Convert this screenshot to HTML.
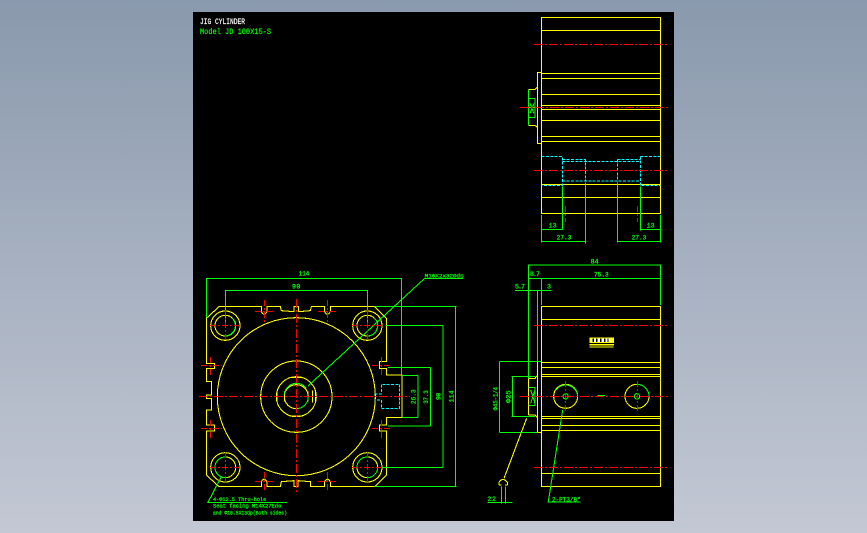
<!DOCTYPE html>
<html><head><meta charset="utf-8"><style>
html,body{margin:0;padding:0;width:867px;height:533px;overflow:hidden;background:linear-gradient(#8a99ad,#c3c8d4)}
#c{position:absolute;left:193px;top:12px;width:481px;height:509px;background:#000}
svg{position:absolute;left:0;top:0;shape-rendering:crispEdges}
text{font-family:"Liberation Mono",monospace;fill:#0f0;stroke:#0f0;stroke-width:.8}
.y{fill:none;stroke:#ff0;stroke-width:3.2}
.g{fill:none;stroke:#0f0;stroke-width:3.2}
.r{fill:none;stroke:#f00;stroke-width:1;stroke-dasharray:9 2 2 2}
.r2{fill:none;stroke:#f00;stroke-width:1;stroke-dasharray:6 2 2 2}
.c{fill:none;stroke:#0ff;stroke-width:3.2;stroke-dasharray:9 4}
</style></head><body>
<div id="c"></div>
<svg width="867" height="533" viewBox="0 0 867 533">
<text x="200" y="24" font-size="8" textLength="45" lengthAdjust="spacingAndGlyphs" style="fill:#fff;stroke:#fff;stroke-width:.2">JIG CYLINDER</text>
<text x="200" y="34" font-size="8" textLength="71" lengthAdjust="spacingAndGlyphs" style="stroke-width:.2">Model JD 100X15-S</text>

<g transform="translate(193 260) scale(.33333)">
<path class="y" d="M78 140H205V155Q213 170 222 155V140H262L265 152 303 155V140H317V155L352 152 355 140H395V155Q403 170 412 155V140H545L580 175V305H560V325H580V345L627 345V472H580V495H560V513H580V645L545 680H412V665Q403 650 395 665V680H352V665L315 662V680H303V662L265 665 262 680H222V665Q213 650 205 665V680H78L40 645V513H65V495H40V450H55V415H40V405H55V365H40V325H65V310H40V175Z"/>
<circle class="y" cx="310" cy="410" r="237"/>
<circle class="y" cx="310" cy="410" r="107"/>
<circle class="y" cx="310" cy="410" r="60"/>
<circle class="y" cx="310" cy="410" r="36"/>
<path class="y" d="M275 395V425M345 395V425M290 352H330M290 468H330M359 392V428M368 392V428M252 392V428"/>
<circle class="y" cx="97" cy="197" r="44"/><circle class="y" cx="523" cy="197" r="44"/><circle class="y" cx="97" cy="622" r="44"/><circle class="y" cx="523" cy="622" r="44"/>
<circle class="y" cx="97" cy="197" r="31"/><circle class="y" cx="523" cy="197" r="31"/><circle class="y" cx="97" cy="622" r="31"/><circle class="y" cx="523" cy="622" r="31"/>
<path class="g" d="M118 175A31 31 0 0 1 97 228M545 175A31 31 0 0 1 523 228M66 622A31 31 0 0 1 97 591M100 653A31 31 0 0 1 66 622M492 622A31 31 0 0 1 523 591M554 622A31 31 0 0 1 523 653M275 400A36 36 0 0 1 340 385M346 410A36 36 0 0 1 310 446"/>
<path class="c" d="M545 402H565V373H620V445H565V420H545"/>
<path class="g" d="M40 172V55H625V345M97 190V92H523V190M545 140H790M545 680H790M788 140V680M578 197H750M550 622H750M750 197V622M585 323H712M585 498H712M712 323V498M627 347H675M627 472H675M675 347V472"/>
<path class="g" d="M810 55H695L345 378M282 727H45L85 650"/>
<text x="317" y="47" font-size="18" textLength="32" lengthAdjust="spacingAndGlyphs">114</text>
<text x="297" y="86" font-size="20" textLength="25">90</text>
<text x="695" y="52" font-size="17" textLength="117" lengthAdjust="spacingAndGlyphs">M16X2x320dp</text>
<text x="60" y="723" font-size="17" textLength="160" lengthAdjust="spacingAndGlyphs">4-Φ12.5 Thru-hole</text>
<text x="60" y="743" font-size="17" textLength="205" lengthAdjust="spacingAndGlyphs">Seat facing M14X27Edo</text>
<text x="60" y="764" font-size="17" textLength="222" lengthAdjust="spacingAndGlyphs">and Φ18.5X13dp(Both sides)</text>
<text transform="translate(667 432) rotate(-90)" font-size="19" textLength="44" lengthAdjust="spacingAndGlyphs">26.3</text>
<text transform="translate(705 431) rotate(-90)" font-size="19" textLength="40" lengthAdjust="spacingAndGlyphs">37.3</text>
<text transform="translate(743 420) rotate(-90)" font-size="19" textLength="22">90</text>
<text transform="translate(781 427) rotate(-90)" font-size="19" textLength="36" lengthAdjust="spacingAndGlyphs">114</text>
</g>

<g transform="translate(480 255) scale(.33333)">
<path class="y" d="M184 154H541V694H184ZM184 193H541M184 322H541M184 337H541M184 358H541M184 364H541M184 484H541M184 490H541M184 511H541M184 526H541M184 655H541"/>
<path class="y" d="M184 319H172V532H184M145 370H165L172 362M145 480H165L172 488M145 370V480"/>
<circle class="y" cx="257" cy="424" r="36"/><circle class="y" cx="471" cy="424" r="36"/>
<circle class="g" cx="257" cy="424" r="8"/><circle class="g" cx="471" cy="424" r="8"/>
<path class="g" d="M228 405A36 36 0 0 1 293 424M470 388A36 36 0 0 1 507 424M145 397H165V452H145M152 405L165 445M165 405L152 445M352 421H375"/>
<rect x="328" y="247" width="74" height="24" fill="#ff0"/>
<rect x="334" y="251" width="56" height="10" fill="#fff"/>
<path d="M340 251V261M350 251V261M362 251V261M374 251V261M384 251V261" stroke="#000" stroke-width="4"/>
<path class="y" d="M328 276H400" />
<path d="M328 266H402" stroke="#000" stroke-width="3"/>
<path class="g" d="M145 28V319M145 30H541M145 70H541M541 28V150M184 70V150M105 106H214M145 106V370M172 106V319M58 319H184M58 532H172M58 319V532M95 364H165M95 484H165M97 364V484"/>
<path class="g" d="M205 740L248 465M202 741H302M22 742H98M64 695V745M77 695V745"/>
<path class="y" d="M140 490L72 670M57 690V682Q68 665 82 682V690M57 690H65M75 690H82"/>
<text x="332" y="26" font-size="20" textLength="24">84</text>
<text x="150" y="63" font-size="20" textLength="30">8.7</text>
<text x="342" y="64" font-size="20" textLength="44" lengthAdjust="spacingAndGlyphs">75.3</text>
<text x="105" y="101" font-size="20" textLength="30">5.7</text>
<text x="201" y="101" font-size="20">3</text>
<text transform="translate(52 466) rotate(-90)" font-size="18" textLength="70" lengthAdjust="spacingAndGlyphs">Φ45-1/4</text>
<text transform="translate(91 444) rotate(-90)" font-size="19" textLength="38" lengthAdjust="spacingAndGlyphs">Φ25</text>
<text x="22" y="738" font-size="20" textLength="26">22</text>
<text x="216" y="739" font-size="18" textLength="86" lengthAdjust="spacingAndGlyphs">2-PT3/8"</text>
</g>

<g transform="translate(510 10) scale(.33333)">
<path class="y" d="M95 22H451V610H95ZM95 61H451M95 190H451M95 205H451M95 253H451M95 286H451M95 298H451M95 331H451M95 379H451M95 394H451M95 523H451M95 562H451"/>
<path class="y" d="M95 187H82V400H95M55 238H75L82 232M55 346H75L82 352"/>
<path class="g" d="M55 238V346M55 265H75V322H55M60 280L72 310M72 280L60 310M57 292H75"/>
<path class="c" d="M95 439H157V526H95M157 448H226V515M157 455H391M322 448H391M322 448V515M391 439H451M391 439V526H451M157 513H391"/>
<path class="g" d="M157 530V658M226 518V700M322 518V697M391 530V662M95 615V697M451 615V697M95 658H157M391 658H451M95 694H226M322 694H451"/>
<text x="116" y="652" font-size="20" textLength="24">13</text>
<text x="140" y="689" font-size="20" textLength="44" lengthAdjust="spacingAndGlyphs">27.3</text>
<text x="410" y="652" font-size="20" textLength="24">13</text>
<text x="365" y="689" font-size="20" textLength="44" lengthAdjust="spacingAndGlyphs">27.3</text>
</g>

<path class="r" d="M534 44.5H668M534 170.5H668M520 107.5H668M534 325.5H668M520 396.5H668M534 467.5H668M199 396.5H410M296.5 299V493"/>
<path class="r2" d="M210 325.5H241M225.5 310V341M352 325.5H383M367.5 310V341M210 467.5H241M225.5 452V483M352 467.5H383M367.5 452V483M255 311.5H274M264.5 300V322M318 311.5H337M327.5 300V322M255 481.5H274M264.5 472V492M318 481.5H337M327.5 472V492M201 365.5H222M210.5 357V375M201 428.5H222M210.5 420V438M372 365.5H390M381.5 357V375M372 428.5H390M381.5 420V438M565.5 381V412M637.5 381V412M565.5 206V222M637.5 206V222"/>
</svg>
</body></html>
